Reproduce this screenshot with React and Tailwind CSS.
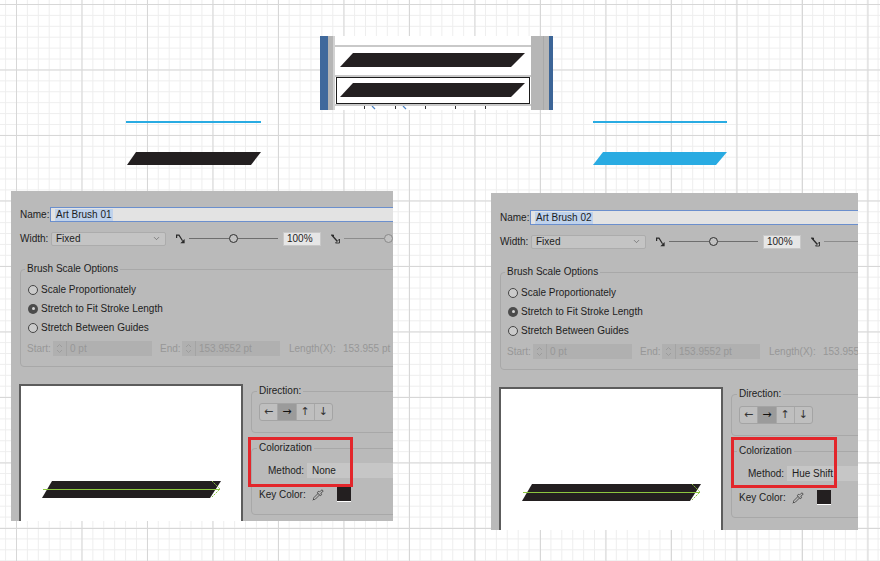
import React from 'react'
import { Pipette, ChevronDown } from 'lucide-react'

const sans = "font-['Liberation_Sans',Arial,sans-serif]"

// slanted stroke shape used by both art brushes
function Stroke({ className, color = '#231f20', skew = 9, w = 134, h = 13 }) {
  return (
    <svg className={className} width={w} height={h} viewBox={`0 0 ${w} ${h}`}>
      <polygon points={`${skew},0 ${w},0 ${w - skew - 1},${h} 0,${h}`} fill={color} />
    </svg>
  )
}

function BrushListSnippet() {
  return (
    <div className="ml-[320px] mt-[36px] flex h-[74px] w-[233px]">
      <div className="w-[8px] bg-[#40699c]" />
      <div className="w-[5px] bg-[#b5b5b5]" />
      <div className="w-[2px] bg-[#d2d2d2]" />
      <div className="flex w-[196px] flex-col bg-white">
        <div className="h-[9px]" />
        <div className="h-[2px] bg-[#c9c9c9]" />
        <div className="h-[28px] pt-[6px] pl-[5px]">
          <Stroke w={185} h={14} skew={13} />
        </div>
        <div className="h-[2px] bg-[#c9c9c9]" />
        <div className="mx-[1px] h-[27px] border-[1.5px] border-[#1b1b1b] pt-[4.5px] pl-[2.5px]">
          <Stroke w={185} h={14} skew={13} />
        </div>
        <div className="h-[2px] bg-[#c9c9c9]" />
        <svg width="196" height="4" viewBox="0 0 196 4">
          <g stroke="#333" strokeWidth="1">
            <line x1="29.5" y1="0" x2="29.5" y2="3" />
            <line x1="60.5" y1="0" x2="60.5" y2="3" />
            <line x1="90.5" y1="0" x2="90.5" y2="3" />
            <line x1="120.5" y1="0" x2="120.5" y2="3" />
            <line x1="150.5" y1="0" x2="150.5" y2="3" />
          </g>
          <g stroke="#4f86c6" strokeWidth="1.2">
            <line x1="37" y1="0" x2="40" y2="3" />
            <line x1="68" y1="0" x2="71" y2="3" />
          </g>
        </svg>
      </div>
      <div className="flex w-[18px] bg-[#b6b6b6]">
        <div className="ml-[12px] w-px bg-[#a9a9a9]" />
      </div>
      <div className="w-[4px] bg-[#3c6597]" />
    </div>
  )
}

function PointIcon({ className, solid }) {
  return (
    <svg className={className} width="9" height="10" viewBox="0 0 9 10">
      {solid ? (
        <>
          <path d="M0 0.8 L3 0.8 L3 3 Z" fill="#2a2a2a" />
          <path d="M0.5 0.8 L6 7" stroke="#2a2a2a" strokeWidth="1.3" fill="none" />
          <path d="M4.5 9 L8.5 9 L8.5 5 Z" stroke="#2a2a2a" strokeWidth="0.9" fill="none" />
        </>
      ) : (
        <>
          <path d="M0.6 0.5 V4 M0.6 1.2 L3 1.2 L6.5 6.8" stroke="#2a2a2a" strokeWidth="1.2" fill="none" />
          <path d="M4.3 9.3 L8.6 9.3 L8.6 5 Z" fill="#2a2a2a" />
        </>
      )}
    </svg>
  )
}

function Slider({ className, before, after, faded }) {
  return (
    <div className={`flex h-[10px] items-center ${className}`}>
      <div className={`h-px ${before} ${faded ? 'bg-[#8c8c8c]' : 'bg-[#6e6e6e]'}`} />
      <div
        className={`h-[9px] w-[9px] shrink-0 rounded-full border-[1.5px] bg-[#c2c2c2] ${
          faded ? 'border-[#8a8a8a]' : 'border-[#2e2e2e]'
        }`}
      />
      <div className={`h-px ${after} bg-[#6e6e6e]`} />
    </div>
  )
}

function Stepper() {
  return (
    <svg width="13" height="15" viewBox="0 0 13 15" className="shrink-0">
      <path d="M4 6 L6.5 3.5 L9 6 M4 9 L6.5 11.5 L9 9" stroke="#9c9c9c" strokeWidth="1" fill="none" />
    </svg>
  )
}

function Radio({ on, label }) {
  return (
    <div className="flex h-[19px] items-center">
      {on ? (
        <span className="ml-[3px] flex h-[10px] w-[10px] items-center justify-center rounded-full bg-[#4b4b4b]">
          <span className="h-[3px] w-[3px] rounded-full bg-[#d6d6d6]" />
        </span>
      ) : (
        <span className="ml-[3px] h-[10px] w-[10px] rounded-full border border-[#454545] bg-[#cbcbcb]" />
      )}
      <span className="ml-[3px]">{label}</span>
    </div>
  )
}

function PreviewStroke() {
  return (
    <svg width="220" height="150" viewBox="0 0 220 150">
      <polygon points="31,95 200,95 189,112 21,112" fill="#231f20" />
      <line x1="22" y1="103.5" x2="199" y2="103.5" stroke="#8cc63f" strokeWidth="1" />
      <path d="M191 95 L199 103 L191 111" stroke="#8cc63f" strokeWidth="1" fill="none" strokeDasharray="2 1" />
    </svg>
  )
}

const arrows = ['←', '→', '↑', '↓']

function BrushDialog({ name, method, className, padTop, markClass }) {
  return (
    <div className={`relative overflow-hidden bg-[#bababa] text-[10px] leading-[12px] text-[#1d1d1d] ${sans} ${className}`}>
      <div className={`w-[470px] pl-[9px] ${padTop}`}>
        {/* name */}
        <div className="flex h-[15px] items-center">
          <span className="w-[30px] shrink-0">Name:</span>
          <div className="flex h-[15px] flex-1 items-center border border-[#6b8fcd] bg-[#e3e3e3] pl-[4px]">
            <span className="bg-[#bfd2ec] px-[1px]">{name}</span>
          </div>
        </div>

        {/* width */}
        <div className="mt-[9px] flex h-[15px] items-center">
          <span className="w-[31px] shrink-0">Width:</span>
          <div className="flex h-[14px] w-[115px] shrink-0 items-center justify-between rounded-[2px] border border-[#acacac] bg-[#c4c4c4] pl-[4px] pr-[4px]">
            <span>Fixed</span>
            <ChevronDown size={9} strokeWidth={1.6} className="text-[#555]" />
          </div>
          <PointIcon className="ml-[10px] shrink-0" />
          <Slider className="ml-[4px] w-[89px] shrink-0" before="w-[40px]" after="flex-1" />
          <div className="ml-[5px] flex h-[14px] w-[38px] shrink-0 items-center border border-[#c8c8c8] bg-[#e6e6e6] pl-[3px]">
            100%
          </div>
          <PointIcon solid className="ml-[10px] shrink-0" />
          <Slider faded className="ml-[4px] w-[60px] shrink-0" before="w-[40px]" after="flex-1" />
        </div>

        {/* brush scale options */}
        <fieldset className="mt-[17px] w-[450px] rounded-[4px] border border-[#a8a8a8] pb-[10px] pl-[4px]">
          <legend className="px-[2px] leading-[12px]">Brush Scale Options</legend>
          <div className="mt-[5px]">
            <Radio label="Scale Proportionately" />
            <Radio on label="Stretch to Fit Stroke Length" />
            <Radio label="Stretch Between Guides" />
          </div>
          <div className="mt-[4px] flex h-[15px] items-center text-[#979797]">
            <span className="ml-[2px] w-[26px] shrink-0">Start:</span>
            <div className="flex h-[15px] w-[99px] shrink-0 items-center bg-[#b0b0b0]">
              <Stepper />
              <div className="h-[15px] w-px bg-[#a4a4a4]" />
              <span className="pl-[3px]">0 pt</span>
            </div>
            <span className="ml-[8px] w-[22px] shrink-0">End:</span>
            <div className="flex h-[15px] w-[98px] shrink-0 items-center bg-[#b0b0b0]">
              <Stepper />
              <div className="h-[15px] w-px bg-[#a4a4a4]" />
              <span className="pl-[3px]">153.9552 pt</span>
            </div>
            <span className="ml-[9px] w-[54px] shrink-0">Length(X):</span>
            <span>153.955 pt</span>
          </div>
        </fieldset>

        {/* preview + direction / colorization */}
        <div className="-ml-px mt-[17px] flex items-start">
          <div className="h-[150px] w-[224px] shrink-0 overflow-hidden border-2 border-[#5c5c5c] bg-white">
            <PreviewStroke />
          </div>
          <div className="ml-[8px] mt-px flex w-[210px] shrink-0 flex-col">
            <fieldset className="rounded-[4px] border border-[#a8a8a8] pb-[11px] pl-[5px]">
              <legend className="px-[2px] leading-[12px]">Direction:</legend>
              <div className="ml-[2px] mt-[6px] flex h-[18px] w-[74px] overflow-hidden rounded-[3px] border border-[#a4a4a4] bg-[#bfbfbf] font-['DejaVu_Sans',sans-serif]">
                {arrows.map((a, i) => (
                  <div
                    key={a}
                    className={`flex flex-1 items-center justify-center text-[11px] ${
                      i > 0 ? 'border-l border-[#a8a8a8]' : ''
                    } ${i === 1 ? 'bg-[#9b9b9b] text-[#111]' : 'text-[#333]'}`}
                  >
                    {a}
                  </div>
                ))}
              </div>
            </fieldset>
            <fieldset className="mt-[9px] rounded-[4px] border border-[#a8a8a8] pb-[12px] pl-[5px]">
              <legend className="px-[2px] leading-[12px]">Colorization</legend>
              <div className="mt-[9px] flex h-[15px] items-center">
                <span className="ml-[11px] w-[39px] shrink-0">Method:</span>
                <div className="flex h-[15px] flex-1 items-center bg-[#c6c6c6] pl-[5px]">{method}</div>
              </div>
              <div className="mt-[9px] flex h-[15px] items-center">
                <span className="ml-[2px] w-[53px] shrink-0">Key Color:</span>
                <Pipette size={12} strokeWidth={1.4} className="shrink-0 text-[#2b2b2b]" />
                <div className="ml-[13px] h-[15px] w-[14px] shrink-0 border-b border-white bg-[#231f20]" />
              </div>
            </fieldset>
          </div>
        </div>
      </div>

      {/* annotation around the colorization method */}
      <div className={`absolute border-[3px] border-[#e3262b] ${markClass}`} />
    </div>
  )
}

export default function App() {
  return (
    <div className="h-[561px] w-[880px] overflow-hidden bg-white bg-[linear-gradient(to_right,#d7d7d7_1px,transparent_1px),linear-gradient(to_bottom,#d7d7d7_1px,transparent_1px),linear-gradient(to_right,#eeeeee_1px,transparent_1px),linear-gradient(to_bottom,#eeeeee_1px,transparent_1px)] bg-[length:65.5px_65.5px,65.5px_65.5px,10.9167px_10.9167px,10.9167px_10.9167px] bg-[position:16px_4px]">
      <BrushListSnippet />

      <div className="flex items-start">
        {/* brush 01: black */}
        <div className="ml-[11px] flex w-[382px] shrink-0 flex-col">
          <div className="ml-[115px] mt-[11px] h-[2px] w-[135px] bg-[#29abe2]" />
          <Stroke className="ml-[116px] mt-[29px]" />
          <BrushDialog
            name="Art Brush 01"
            method="None"
            className="mt-[26px] h-[330px] w-[382px]"
            padTop="pt-[16px]"
            markClass="left-[237px] top-[246px] h-[50px] w-[105px]"
          />
        </div>

        {/* brush 02: hue shift */}
        <div className="ml-[98px] flex w-[367px] shrink-0 flex-col">
          <div className="ml-[102px] mt-[11px] h-[2px] w-[134px] bg-[#29abe2]" />
          <Stroke className="ml-[102px] mt-[29px]" color="#29abe2" skew={10} />
          <BrushDialog
            name="Art Brush 02"
            method="Hue Shift"
            className="mt-[28px] h-[337px] w-[367px]"
            padTop="pt-[17px]"
            markClass="left-[240px] top-[244px] h-[51px] w-[106px]"
          />
        </div>
      </div>
    </div>
  )
}
